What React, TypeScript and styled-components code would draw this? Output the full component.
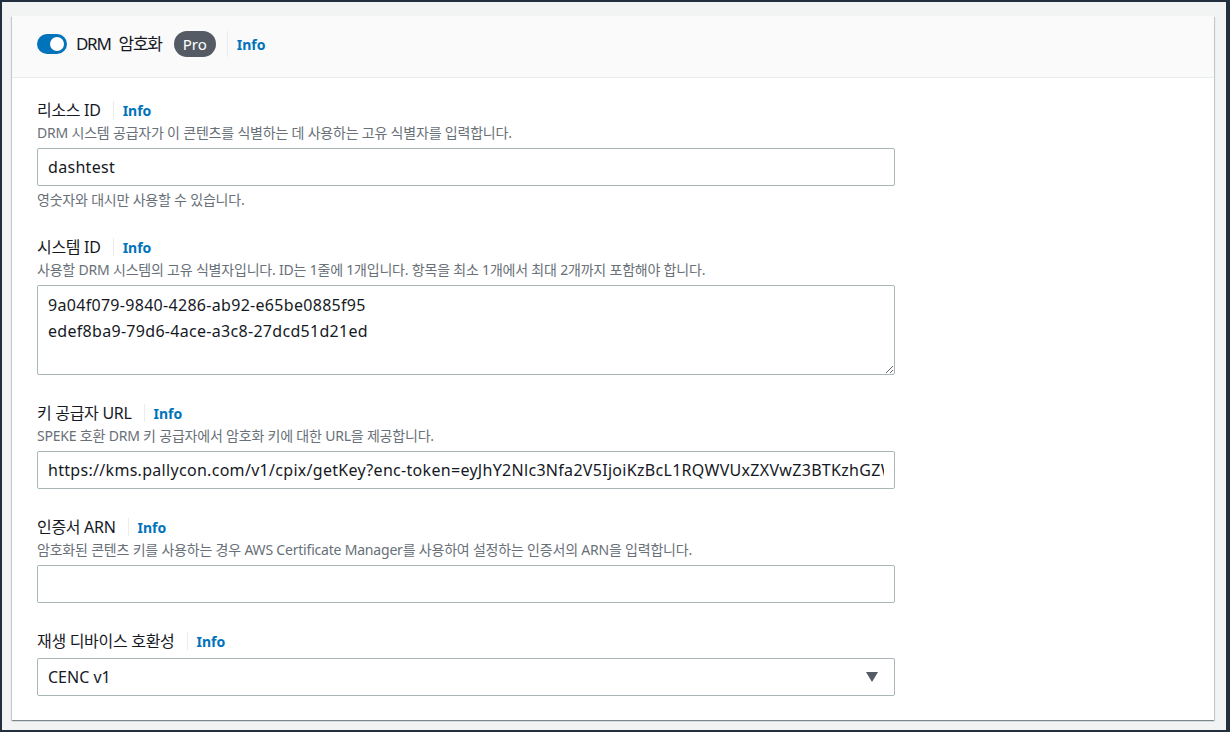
import * as React from "react";
import styled, { createGlobalStyle } from "styled-components";

const GlobalStyle = createGlobalStyle`
  html, body {
    margin: 0;
    padding: 0;
    background: #232f3e;
  }
  body {
    font-family: "Noto Sans", "Noto Sans CJK KR", sans-serif;
    color: #16191f;
  }
  * {
    box-sizing: border-box;
  }
`;

const Frame = styled.div`
  width: 1230px;
  height: 732px;
  display: flex;
  flex-direction: column;
  border: 2px solid #232f3e;
  border-right-width: 4px;
  background: #f2f3f3;
  padding: 14px 12px 10px 10px;
`;

const Card = styled.section`
  flex: 1;
  display: flex;
  flex-direction: column;
  background: #ffffff;
  box-shadow: 0 1px 1px 0 rgba(0, 28, 36, 0.3), 1px 1px 1px 0 rgba(0, 28, 36, 0.15),
    -1px 1px 1px 0 rgba(0, 28, 36, 0.15);
`;

const CardHeader = styled.header`
  display: flex;
  align-items: center;
  height: 62px;
  padding: 14px 25px 19px;
  background: #fafafa;
  border-bottom: 1px solid #eaeded;
`;

const Toggle = styled.span<{ $on: boolean }>`
  position: relative;
  display: inline-block;
  width: 30px;
  height: 20px;
  border-radius: 10px;
  background: ${(p) => (p.$on ? "#0073bb" : "#aab7b8")};

  &::after {
    content: "";
    position: absolute;
    top: 3px;
    left: ${(p) => (p.$on ? "13px" : "3px")};
    width: 14px;
    height: 14px;
    border-radius: 50%;
    background: #ffffff;
  }
`;

const HeaderTitle = styled.h2`
  margin: 0 0 0 9px;
  font-size: 17px;
  font-weight: 400;
  line-height: 28px;
  letter-spacing: -1.3px;
  word-spacing: 5px;
`;

const Badge = styled.span`
  display: inline-flex;
  align-items: center;
  height: 26px;
  margin-left: 12px;
  padding: 0 9px;
  border-radius: 13px;
  background: #545b64;
  color: #ffffff;
  font-size: 15px;
`;

const Divider = styled.span<{ $tall?: boolean }>`
  display: inline-block;
  width: 1px;
  height: ${(p) => (p.$tall ? "26px" : "18px")};
  margin: 0 9px 0 ${(p) => (p.$tall ? "11px" : "12px")};
  background: #eaeded;
`;

const InfoLink = styled.a`
  color: #0073bb;
  font-size: 14px;
  font-weight: 700;
  text-decoration: none;
  cursor: pointer;
`;

const CardBody = styled.div`
  flex: 1;
  display: flex;
  flex-direction: column;
  gap: 27px;
  padding: 21px 25px 24px;
`;

const Field = styled.div`
  display: flex;
  flex-direction: column;
  width: 858px;
`;

const LabelRow = styled.div`
  display: flex;
  align-items: center;
  height: 22px;
`;

const Label = styled.label`
  font-size: 16px;
  line-height: 22px;
  letter-spacing: -0.3px;
  color: #16191f;
`;

const Description = styled.div`
  margin-top: 3px;
  font-size: 14px;
  line-height: 18px;
  letter-spacing: -0.2px;
  color: #687078;
`;

const Hint = styled(Description)`
  margin-top: 5px;
`;

const controlBase = `
  width: 100%;
  margin-top: 6px;
  border: 1px solid #aab7b8;
  border-radius: 2px;
  background: #ffffff;
  color: #16191f;
  font-family: "Noto Sans", "Noto Sans CJK KR", sans-serif;
  font-size: 16px;
  letter-spacing: 0.3px;
  outline: none;
`;

const TextInput = styled.input`
  ${controlBase}
  height: 38px;
  padding: 0 10px;
`;

const TextArea = styled.textarea`
  ${controlBase}
  display: block;
  height: 90px;
  padding: 6px 10px;
  line-height: 26px;
  resize: vertical;
`;

const SelectBox = styled.div`
  ${controlBase}
  display: flex;
  align-items: center;
  justify-content: space-between;
  height: 38px;
  padding: 0 16px 0 10px;
  letter-spacing: 0;
`;

const Caret = styled.svg`
  width: 12px;
  height: 10px;
  fill: #545b64;
`;

interface FormFieldProps {
  label: string;
  description?: string;
  hint?: string;
  children: React.ReactNode;
}

const FormField = ({ label, description, hint, children }: FormFieldProps) => (
  <Field>
    <LabelRow>
      <Label>{label}</Label>
      <Divider />
      <InfoLink>Info</InfoLink>
    </LabelRow>
    {description && <Description>{description}</Description>}
    {children}
    {hint && <Hint>{hint}</Hint>}
  </Field>
);

const keyUrl =
  "https://kms.pallycon.com/v1/cpix/getKey?enc-token=eyJhY2Nlc3Nfa2V5IjoiKzBcL1RQWVUxZXVwZ3BTKzhGZWtzdGhGUWJ5QT09In0";

export default function App() {
  return (
    <>
      <GlobalStyle />
      <Frame>
        <Card>
          <CardHeader>
            <Toggle $on={true} />
            <HeaderTitle>DRM 암호화</HeaderTitle>
            <Badge>Pro</Badge>
            <Divider $tall />
            <InfoLink>Info</InfoLink>
          </CardHeader>
          <CardBody>
            <FormField
              label="리소스 ID"
              description="DRM 시스템 공급자가 이 콘텐츠를 식별하는 데 사용하는 고유 식별자를 입력합니다."
              hint="영숫자와 대시만 사용할 수 있습니다."
            >
              <TextInput defaultValue="dashtest" />
            </FormField>
            <FormField
              label="시스템 ID"
              description="사용할 DRM 시스템의 고유 식별자입니다. ID는 1줄에 1개입니다. 항목을 최소 1개에서 최대 2개까지 포함해야 합니다."
            >
              <TextArea
                defaultValue={"9a04f079-9840-4286-ab92-e65be0885f95\nedef8ba9-79d6-4ace-a3c8-27dcd51d21ed"}
              />
            </FormField>
            <FormField
              label="키 공급자 URL"
              description="SPEKE 호환 DRM 키 공급자에서 암호화 키에 대한 URL을 제공합니다."
            >
              <TextInput defaultValue={keyUrl} />
            </FormField>
            <FormField
              label="인증서 ARN"
              description="암호화된 콘텐츠 키를 사용하는 경우 AWS Certificate Manager를 사용하여 설정하는 인증서의 ARN을 입력합니다."
            >
              <TextInput defaultValue="" />
            </FormField>
            <FormField label="재생 디바이스 호환성">
              <SelectBox>
                <span>CENC v1</span>
                <Caret viewBox="0 0 12 10">
                  <path d="M0 0h12L6 10z" />
                </Caret>
              </SelectBox>
            </FormField>
          </CardBody>
        </Card>
      </Frame>
    </>
  );
}
